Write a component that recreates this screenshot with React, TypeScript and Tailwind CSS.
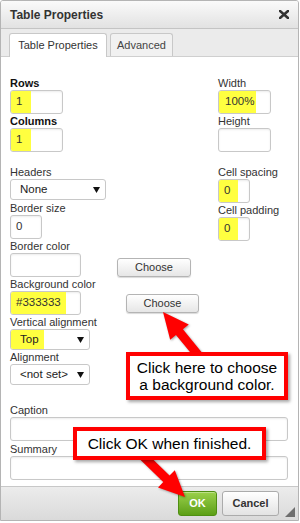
import React from "react";

function Label({ children, bold }: { children: React.ReactNode; bold?: boolean }) {
  return (
    <div
      className={
        bold
          ? "h-[14px] leading-[14px] text-[11px] font-bold text-[#111]"
          : "h-[14px] leading-[14px] text-[11px] text-[#333]"
      }
    >
      {children}
    </div>
  );
}

function Field({
  w,
  value,
  hl,
  h = "h-[24px]",
}: {
  w: string;
  value?: string;
  hl?: string;
  h?: string;
}) {
  return (
    <div
      className={`${w} ${h} rounded-[3px] border border-[#c8c8c8] bg-white flex items-stretch overflow-hidden shadow-[inset_0_1px_2px_rgba(0,0,0,0.08)]`}
    >
      {value ? (
        <span
          className={`${hl ?? ""} flex items-center pl-[5px] text-[11.5px] text-[#333]`}
        >
          {value}
        </span>
      ) : null}
    </div>
  );
}

function Select({ w, value, hl }: { w: string; value: string; hl?: string }) {
  return (
    <div
      className={`${w} h-[21px] rounded-[3px] border border-[#c8c8c8] bg-white flex items-stretch justify-between overflow-hidden`}
    >
      <span className={`${hl ?? ""} flex items-center pl-[9px] text-[11.5px] text-[#222]`}>
        {value}
      </span>
      <span className="flex items-center pr-[5px]">
        <svg width="7" height="6" viewBox="0 0 7 6">
          <polygon points="0,0 7,0 3.5,6" fill="#111" />
        </svg>
      </span>
    </div>
  );
}

function ChooseBtn({ cls }: { cls: string }) {
  return (
    <div
      className={`${cls} h-[19px] rounded-[3px] border border-[#b4b4b4] bg-gradient-to-b from-[#ffffff] to-[#e6e6e6] flex items-center justify-center text-[11px] text-[#333] shadow-[0_1px_1px_rgba(0,0,0,0.15)]`}
    >
      Choose
    </div>
  );
}

export default function App() {
  return (
    <div className="relative w-[300px] h-[523px] bg-white font-['Liberation_Sans',Arial,sans-serif]">
      <div className="w-[299px] h-[521px] border border-[#b4b4b4] rounded-t-[3px] flex flex-col overflow-hidden">
        {/* Title bar */}
        <div className="h-[28px] shrink-0 border-b border-[#c4c4c4] bg-gradient-to-b from-[#fafafa] to-[#e2e2e2] flex items-center justify-between pl-[9px] pr-[9px]">
          <span className="text-[12px] font-bold text-[#333]">Table Properties</span>
          <svg width="10" height="9" viewBox="0 0 10 9">
            <path d="M1 1 L9 8 M9 1 L1 8" stroke="#333" strokeWidth="2.6" strokeLinecap="square" />
          </svg>
        </div>
        {/* Tabs */}
        <div className="h-[28px] shrink-0 bg-[#ebebeb] border-b border-[#cfcfcf] flex items-end pl-[8px] gap-[3px]">
          <div className="h-[24px] w-[98px] -mb-px bg-white border border-b-0 border-[#c8c8c8] rounded-t-[3px] flex items-center justify-center text-[11px] text-[#333]">
            Table Properties
          </div>
          <div className="h-[23px] w-[63px] bg-[#f1f1f1] border border-b-0 border-[#c8c8c8] rounded-t-[3px] flex items-center justify-center text-[11px] text-[#444]">
            Advanced
          </div>
        </div>
        {/* Content */}
        <div className="flex-1 bg-white pl-[9px] pr-[10px] pt-[19px] flex flex-col">
          <div className="flex">
            <div className="w-[208px] flex flex-col">
              <Label bold>Rows</Label>
              <Field w="w-[53px]" value="1" hl="bg-[#ffff40] w-[20px]" />
              <Label bold>Columns</Label>
              <Field w="w-[53px]" value="1" hl="bg-[#ffff40] w-[20px]" />
            </div>
            <div className="flex flex-col">
              <Label>Width</Label>
              <Field w="w-[53px]" value="100%" hl="bg-[#ffff40] w-[37px] pl-[6px]" />
              <Label>Height</Label>
              <Field w="w-[53px]" />
            </div>
          </div>
          <div className="flex mt-[13px]">
            <div className="w-[107px] flex flex-col">
              <Label>Headers</Label>
              <Select w="w-[96px]" value="None" />
              <div className="h-px" />
              <Label>Border size</Label>
              <Field w="w-[32px]" value="0" />
              <Label>Border color</Label>
              <Field w="w-[71px]" />
              <Label>Background color</Label>
              <Field w="w-[71px]" value="#333333" hl="bg-[#ffff40] w-[55px]" />
              <Label>Vertical alignment</Label>
              <Select w="w-[80px]" value="Top" hl="bg-[#ffff40] w-[33px]" />
              <Label>Alignment</Label>
              <Select w="w-[80px]" value="<not set>" />
            </div>
            <div className="w-[101px] flex flex-col">
              <ChooseBtn cls="w-[74px] mt-[93px]" />
              <ChooseBtn cls="w-[73px] ml-[9px] mt-[17px]" />
            </div>
            <div className="flex flex-col">
              <Label>Cell spacing</Label>
              <Field w="w-[32px]" value="0" hl="bg-[#ffff40] w-[19px]" />
              <Label>Cell padding</Label>
              <Field w="w-[32px]" value="0" hl="bg-[#ffff40] w-[19px]" />
            </div>
          </div>
          <div className="mt-[18px] flex flex-col">
            <Label>Caption</Label>
            <Field w="w-full" h="h-[24px]" />
            <div className="h-[1px]" />
            <Label>Summary</Label>
            <Field w="w-full" />
          </div>
        </div>
        {/* Footer */}
        <div className="h-[34px] shrink-0 border-t border-[#c8c8c8] bg-gradient-to-b from-[#ececec] to-[#dadada] flex items-start justify-end pt-[4px] pr-[3px]">
          <div className="h-[25px] w-[39px] rounded-[3px] border border-[#4f8f12] bg-gradient-to-b from-[#9bd14a] to-[#5c9f14] flex items-center justify-center text-[11px] font-bold text-white shadow-[inset_0_1px_0_rgba(255,255,255,0.35)]">
            OK
          </div>
          <div className="h-[25px] w-[57px] ml-[5px] rounded-[3px] border border-[#ababab] bg-gradient-to-b from-[#ffffff] to-[#e3e3e3] flex items-center justify-center text-[11px] font-bold text-[#333]">
            Cancel
          </div>
          <svg className="self-end mb-[3px] ml-[6px]" width="10" height="10" viewBox="0 0 10 10">
            <polygon points="10,0 10,10 0,10" fill="#6e6e6e" />
          </svg>
        </div>
      </div>

      {/* Annotation arrows */}
      <svg
        className="absolute left-0 top-0 pointer-events-none drop-shadow-[1px_1px_1px_rgba(0,0,0,0.35)]"
        width="300"
        height="523"
        viewBox="0 0 300 523"
      >
        <polygon
          points="163,312 188.75,324.52 182.94,329.27 202.48,353.15 195.52,358.85 175.98,334.97 170.17,339.72"
          fill="#ff0000"
        />
        <polygon
          points="185,497 174.8,470.2 169.55,475.58 146.15,452.78 139.85,459.22 163.25,482.02 158,487.4"
          fill="#ff0000"
        />
      </svg>

      {/* Annotation callouts */}
      <div className="absolute left-[126px] top-[352px] w-[162px] h-[48px] border-[4px] border-[#ff0000] bg-white shadow-[2px_2px_3px_rgba(0,0,0,0.35)] flex flex-col items-center justify-center text-[15.5px] leading-[17px] text-black">
        <span>Click here to choose</span>
        <span>a background color.</span>
      </div>
      <div className="absolute left-[73px] top-[427px] w-[193px] h-[33px] border-[4px] border-[#ff0000] bg-white shadow-[2px_2px_3px_rgba(0,0,0,0.35)] flex items-center justify-center text-[15.5px] leading-[17px] text-black">
        Click OK when finished.
      </div>
    </div>
  );
}
